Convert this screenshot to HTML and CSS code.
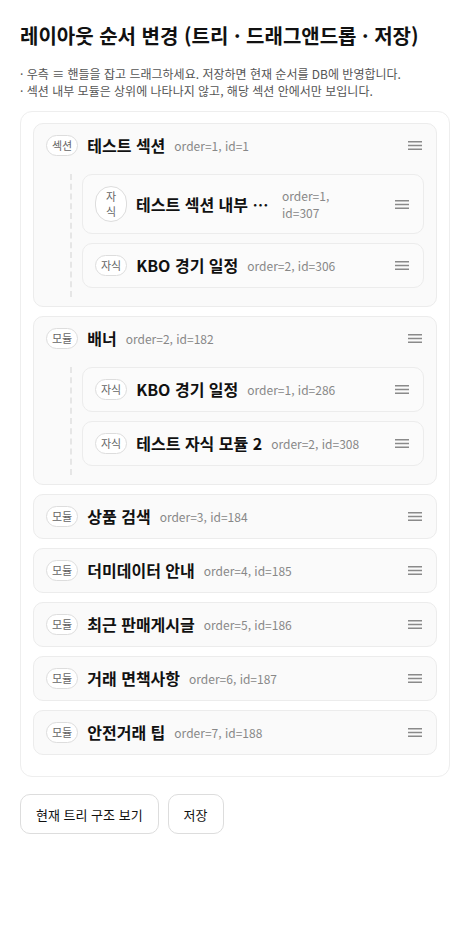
FILE: index.html
```html
<!DOCTYPE html>
<html lang="ko">
<head>
    <meta charset="UTF-8">
    <meta name="viewport" content="width=device-width, initial-scale=1.0">
    <title>레이아웃 순서 변경</title>
    <link rel="stylesheet" href="styles.css">
</head>
<body>
    <div class="page">
        <h1>레이아웃 순서 변경 (트리 · 드래그앤드롭 · 저장)</h1>
        <p class="help">
            · 우측 ≡ 핸들을 잡고 드래그하세요. 저장하면 현재 순서를 DB에 반영합니다.<br>
            · 섹션 내부 모듈은 상위에 나타나지 않고, 해당 섹션 안에서만 보입니다.
        </p>

        <div class="tree">
            <div class="node">
                <div class="row">
                    <div class="info">
                        <span class="badge">섹션</span>
                        <span class="name">테스트 섹션</span>
                        <span class="meta">order=1, id=1</span>
                    </div>
                    <span class="handle"><svg width="14" height="9" viewBox="0 0 14 9"><path d="M0 0.75h14M0 4.5h14M0 8.25h14" stroke="#8a8a8a" stroke-width="1.3"/></svg></span>
                </div>
                <div class="children">
                    <div class="node child">
                        <div class="row">
                            <div class="info">
                                <span class="badge">자식</span>
                                <span class="name">테스트 섹션 내부 자식 모듈 1</span>
                                <span class="meta">order=1, id=307</span>
                            </div>
                            <span class="handle"><svg width="14" height="9" viewBox="0 0 14 9"><path d="M0 0.75h14M0 4.5h14M0 8.25h14" stroke="#8a8a8a" stroke-width="1.3"/></svg></span>
                        </div>
                    </div>
                    <div class="node child">
                        <div class="row">
                            <div class="info">
                                <span class="badge">자식</span>
                                <span class="name">KBO 경기 일정</span>
                                <span class="meta">order=2, id=306</span>
                            </div>
                            <span class="handle"><svg width="14" height="9" viewBox="0 0 14 9"><path d="M0 0.75h14M0 4.5h14M0 8.25h14" stroke="#8a8a8a" stroke-width="1.3"/></svg></span>
                        </div>
                    </div>
                </div>
            </div>

            <div class="node">
                <div class="row">
                    <div class="info">
                        <span class="badge">모듈</span>
                        <span class="name">배너</span>
                        <span class="meta">order=2, id=182</span>
                    </div>
                    <span class="handle"><svg width="14" height="9" viewBox="0 0 14 9"><path d="M0 0.75h14M0 4.5h14M0 8.25h14" stroke="#8a8a8a" stroke-width="1.3"/></svg></span>
                </div>
                <div class="children">
                    <div class="node child">
                        <div class="row">
                            <div class="info">
                                <span class="badge">자식</span>
                                <span class="name">KBO 경기 일정</span>
                                <span class="meta">order=1, id=286</span>
                            </div>
                            <span class="handle"><svg width="14" height="9" viewBox="0 0 14 9"><path d="M0 0.75h14M0 4.5h14M0 8.25h14" stroke="#8a8a8a" stroke-width="1.3"/></svg></span>
                        </div>
                    </div>
                    <div class="node child">
                        <div class="row">
                            <div class="info">
                                <span class="badge">자식</span>
                                <span class="name">테스트 자식 모듈 2</span>
                                <span class="meta">order=2, id=308</span>
                            </div>
                            <span class="handle"><svg width="14" height="9" viewBox="0 0 14 9"><path d="M0 0.75h14M0 4.5h14M0 8.25h14" stroke="#8a8a8a" stroke-width="1.3"/></svg></span>
                        </div>
                    </div>
                </div>
            </div>

            <div class="node">
                <div class="row">
                    <div class="info">
                        <span class="badge">모듈</span>
                        <span class="name">상품 검색</span>
                        <span class="meta">order=3, id=184</span>
                    </div>
                    <span class="handle"><svg width="14" height="9" viewBox="0 0 14 9"><path d="M0 0.75h14M0 4.5h14M0 8.25h14" stroke="#8a8a8a" stroke-width="1.3"/></svg></span>
                </div>
            </div>

            <div class="node">
                <div class="row">
                    <div class="info">
                        <span class="badge">모듈</span>
                        <span class="name">더미데이터 안내</span>
                        <span class="meta">order=4, id=185</span>
                    </div>
                    <span class="handle"><svg width="14" height="9" viewBox="0 0 14 9"><path d="M0 0.75h14M0 4.5h14M0 8.25h14" stroke="#8a8a8a" stroke-width="1.3"/></svg></span>
                </div>
            </div>

            <div class="node">
                <div class="row">
                    <div class="info">
                        <span class="badge">모듈</span>
                        <span class="name">최근 판매게시글</span>
                        <span class="meta">order=5, id=186</span>
                    </div>
                    <span class="handle"><svg width="14" height="9" viewBox="0 0 14 9"><path d="M0 0.75h14M0 4.5h14M0 8.25h14" stroke="#8a8a8a" stroke-width="1.3"/></svg></span>
                </div>
            </div>

            <div class="node">
                <div class="row">
                    <div class="info">
                        <span class="badge">모듈</span>
                        <span class="name">거래 면책사항</span>
                        <span class="meta">order=6, id=187</span>
                    </div>
                    <span class="handle"><svg width="14" height="9" viewBox="0 0 14 9"><path d="M0 0.75h14M0 4.5h14M0 8.25h14" stroke="#8a8a8a" stroke-width="1.3"/></svg></span>
                </div>
            </div>

            <div class="node">
                <div class="row">
                    <div class="info">
                        <span class="badge">모듈</span>
                        <span class="name">안전거래 팁</span>
                        <span class="meta">order=7, id=188</span>
                    </div>
                    <span class="handle"><svg width="14" height="9" viewBox="0 0 14 9"><path d="M0 0.75h14M0 4.5h14M0 8.25h14" stroke="#8a8a8a" stroke-width="1.3"/></svg></span>
                </div>
            </div>
        </div>

        <div class="actions">
            <button type="button">현재 트리 구조 보기</button>
            <button type="button">저장</button>
        </div>
    </div>
</body>
</html>
```

FILE: styles.css
```css
body {
    margin: 0;
    font-family: "Noto Sans CJK KR", "Noto Sans", sans-serif;
    color: #111;
    background: #fff;
}
.page {
    padding: 23px 20px 20px;
}
h1 {
    margin: 0;
    font-size: 20px;
    line-height: 26px;
    font-weight: 700;
}
.help {
    margin: 16px 0 12px;
    font-size: 12px;
    line-height: 17px;
    color: #555;
}
.tree {
    display: flex;
    flex-direction: column;
    gap: 9px;
    padding: 11px 12px 21px;
    border: 1px solid #eee;
    border-radius: 12px;
}
.node {
    padding: 11px 14px 11px 12px;
    border: 1px solid #ececec;
    border-radius: 10px;
    background: #fafafa;
}
.node:has(.children) {
    padding-bottom: 9px;
}
.child {
    background: #fbfbfb;
}
.row {
    display: flex;
    align-items: center;
    gap: 10px;
}
.info {
    flex: 1;
    min-width: 0;
    display: flex;
    align-items: center;
    gap: 9px;
}
.badge {
    min-width: 18px;
    padding: 2px 5px;
    font-size: 11px;
    line-height: 15px;
    color: #666;
    text-align: center;
    background: #fff;
    border: 1px solid #ddd;
    border-radius: 999px;
}
.name {
    min-width: 0;
    max-width: 50%;
    margin: -1px 0;
    font-size: 16px;
    line-height: 23px;
    font-weight: 700;
    white-space: nowrap;
    overflow: hidden;
    text-overflow: ellipsis;
}
.meta {
    min-width: 0;
    font-size: 12px;
    line-height: 17px;
    color: #888;
}
.handle {
    display: flex;
    padding: 4px 0 4px 16px;
    cursor: grab;
}
.children {
    display: flex;
    flex-direction: column;
    gap: 9px;
    margin: 18px -2px 0 24px;
    padding: 0 0 9px 10px;
    border-left: 2px dashed #e6e6e6;
}
.actions {
    display: flex;
    gap: 9px;
    margin-top: 17px;
}
button {
    height: 40px;
    padding: 0 15px;
    font-family: inherit;
    font-size: 13px;
    color: #111;
    background: #fff;
    border: 1px solid #ddd;
    border-radius: 10px;
    cursor: pointer;
}
```
